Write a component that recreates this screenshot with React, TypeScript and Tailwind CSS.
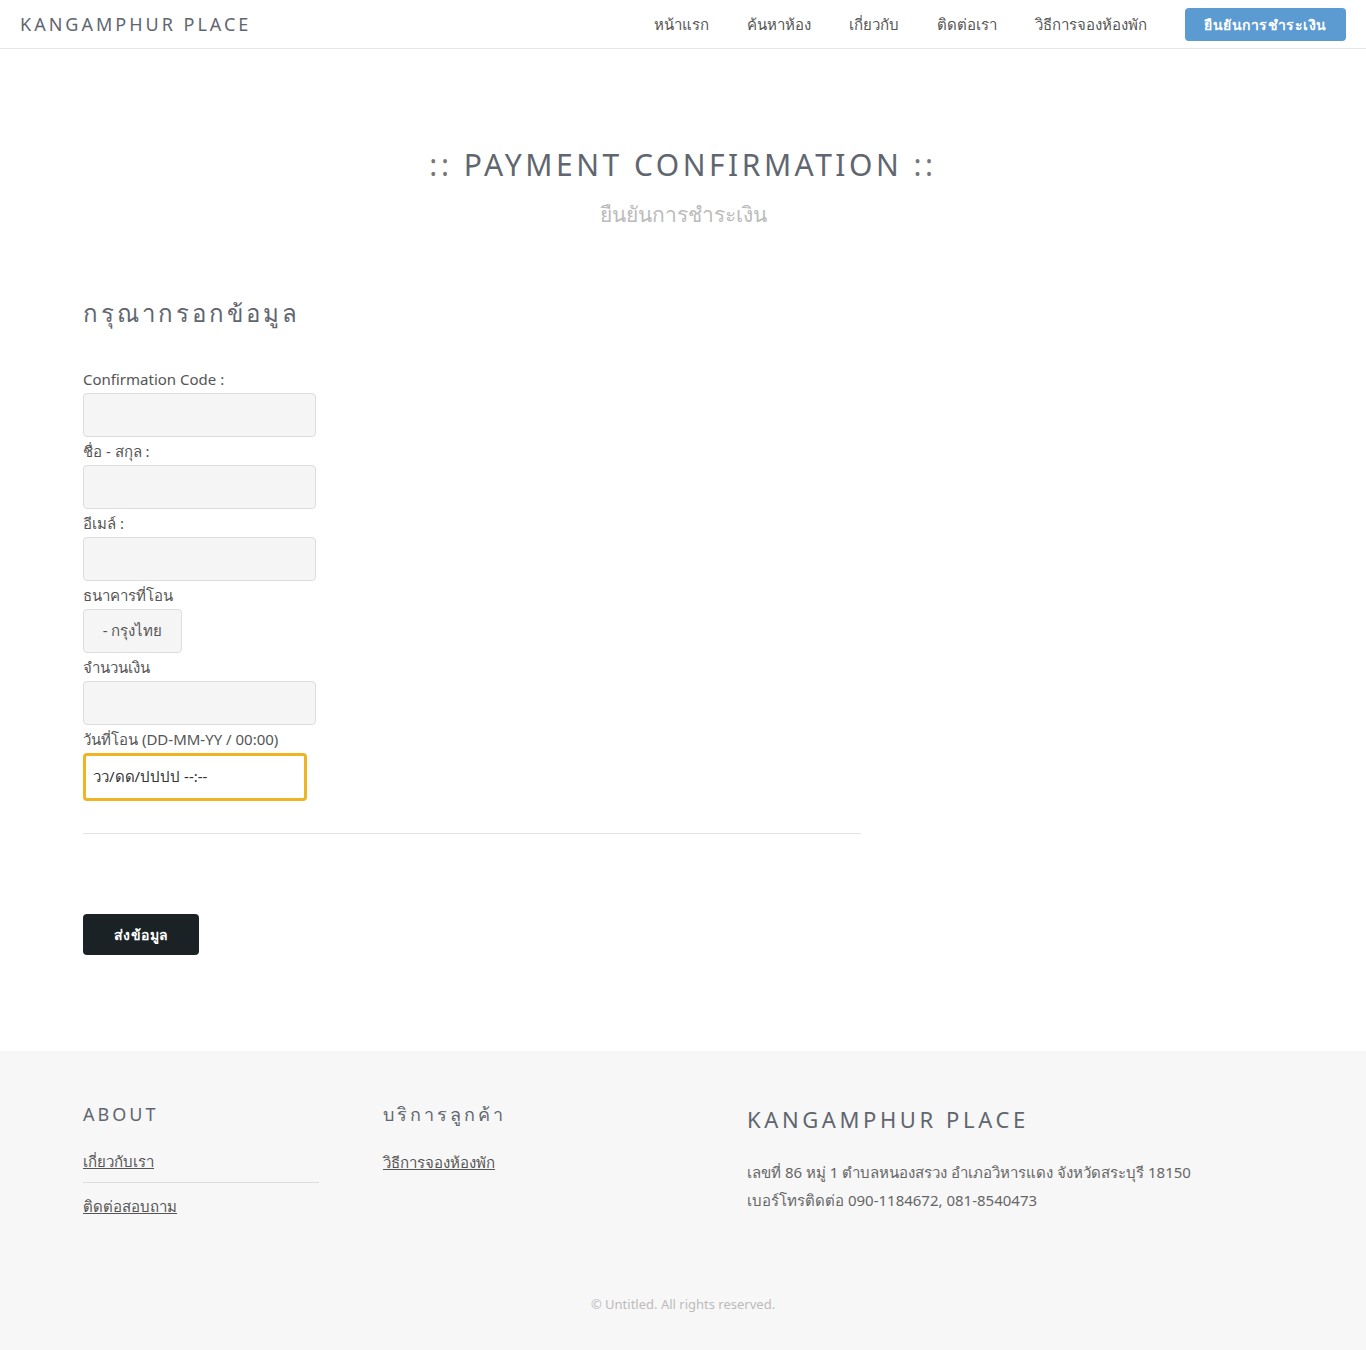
import React from 'react';

const navLinks = ['หน้าแรก', 'ค้นหาห้อง', 'เกี่ยวกับ', 'ติดต่อเรา', 'วิธีการจองห้องพัก'];

const Field = ({ label, children }: { label: string; children: React.ReactNode }) => (
  <div className="flex flex-col">
    <label className="text-[15px] leading-[28px] text-[#555]">{label}</label>
    {children}
  </div>
);

const TextInput = () => (
  <input
    type="text"
    className="h-[44px] w-[233px] rounded-[4px] border border-[#ddd] bg-[#f5f5f5] px-3 text-[15px] outline-none"
  />
);

export default function App() {
  return (
    <div className="min-h-[1350px] bg-white text-[#555]" style={{ fontFamily: '"Noto Sans", "Open Sans", sans-serif' }}>
      {/* header */}
      <header className="flex h-[49px] items-center justify-between border-b border-[#e5e5e5] pl-5 pr-5">
        <div className="text-[18px] tracking-[3px] text-[#5f6670]">KANGAMPHUR PLACE</div>
        <nav className="flex items-center">
          {navLinks.map((l) => (
            <a key={l} href="#" className="mr-[38px] text-[15px] text-[#555]">
              {l}
            </a>
          ))}
          <button className="h-[33px] w-[161px] rounded-[4px] bg-[#5c9bd1] text-[14px] font-semibold tracking-[0.5px] text-white">
            ยืนยันการชำระเงิน
          </button>
        </nav>
      </header>

      {/* title */}
      <section className="flex flex-col items-center pt-[92px]">
        <h1 className="text-[30px] leading-[48px] tracking-[3.5px] text-[#5f6670]">
          <span className="text-[#777]">::</span> PAYMENT CONFIRMATION <span className="text-[#777]">::</span>
        </h1>
        <p className="mt-[10px] text-[21px] text-[#bbb]">ยืนยันการชำระเงิน</p>
      </section>

      {/* form */}
      <section className="ml-[83px] w-[778px] pt-[64px] pb-[96px]">
        <h2 className="text-[24px] tracking-[3px] text-[#5f6670]">กรุณากรอกข้อมูล</h2>
        <form className="mt-[34px] flex flex-col">
          <Field label="Confirmation Code :">
            <TextInput />
          </Field>
          <Field label="ชื่อ - สกุล :">
            <TextInput />
          </Field>
          <Field label="อีเมล์ :">
            <TextInput />
          </Field>
          <Field label="ธนาคารที่โอน">
            <div className="flex h-[44px] w-[99px] items-center justify-center rounded-[4px] border border-[#ddd] bg-[#f5f5f5] text-[15px] text-[#555]">
              - กรุงไทย
            </div>
          </Field>
          <Field label="จำนวนเงิน">
            <TextInput />
          </Field>
          <Field label="วันที่โอน (DD-MM-YY / 00:00)">
            <div className="flex h-[48px] w-[224px] items-center rounded-[4px] border-[3px] border-[#f0b323] bg-white px-[7px] text-[15px] text-[#333]">
              วว/ดด/ปปปป --:--
            </div>
          </Field>
          <div className="mt-[32px] border-t border-[#e3e3e3]" />
          <div className="pt-[80px]">
            <button
              type="button"
              className="h-[41px] w-[116px] rounded-[4px] bg-[#1b2226] text-[14px] font-semibold tracking-[0.5px] text-white"
            >
              ส่งข้อมูล
            </button>
          </div>
        </form>
      </section>

      {/* footer */}
      <footer className="bg-[#f7f7f7] pt-[50px] pb-[36px]">
        <div className="flex pl-[83px]">
          <div className="w-[236px]">
            <h3 className="text-[18px] tracking-[3px] text-[#5f6670]">ABOUT</h3>
            <div className="mt-[22px] flex flex-col">
              <a href="#" className="pb-[10px] text-[15px] text-[#555] underline">เกี่ยวกับเรา</a>
              <div className="border-t border-[#ddd]" />
              <a href="#" className="pt-[12px] text-[15px] text-[#555] underline">ติดต่อสอบถาม</a>
            </div>
          </div>
          <div className="ml-[64px] w-[300px]">
            <h3 className="text-[18px] tracking-[3px] text-[#5f6670]">บริการลูกค้า</h3>
            <div className="mt-[22px]">
              <a href="#" className="text-[15px] text-[#555] underline">วิธีการจองห้องพัก</a>
            </div>
          </div>
          <div className="ml-[64px]">
            <h3 className="mt-[2px] text-[22px] tracking-[3.6px] text-[#5f6670]">KANGAMPHUR PLACE</h3>
            <div className="mt-[22px] text-[15px] leading-[28px] text-[#666]">
              <p>เลขที่ 86 หมู่ 1 ตำบลหนองสรวง อำเภอวิหารแดง จังหวัดสระบุรี 18150</p>
              <p>เบอร์โทรติดต่อ 090-1184672, 081-8540473</p>
            </div>
          </div>
        </div>
        <p className="mt-[77px] text-center text-[13px] text-[#bbb]">© Untitled. All rights reserved.</p>
      </footer>
    </div>
  );
}
